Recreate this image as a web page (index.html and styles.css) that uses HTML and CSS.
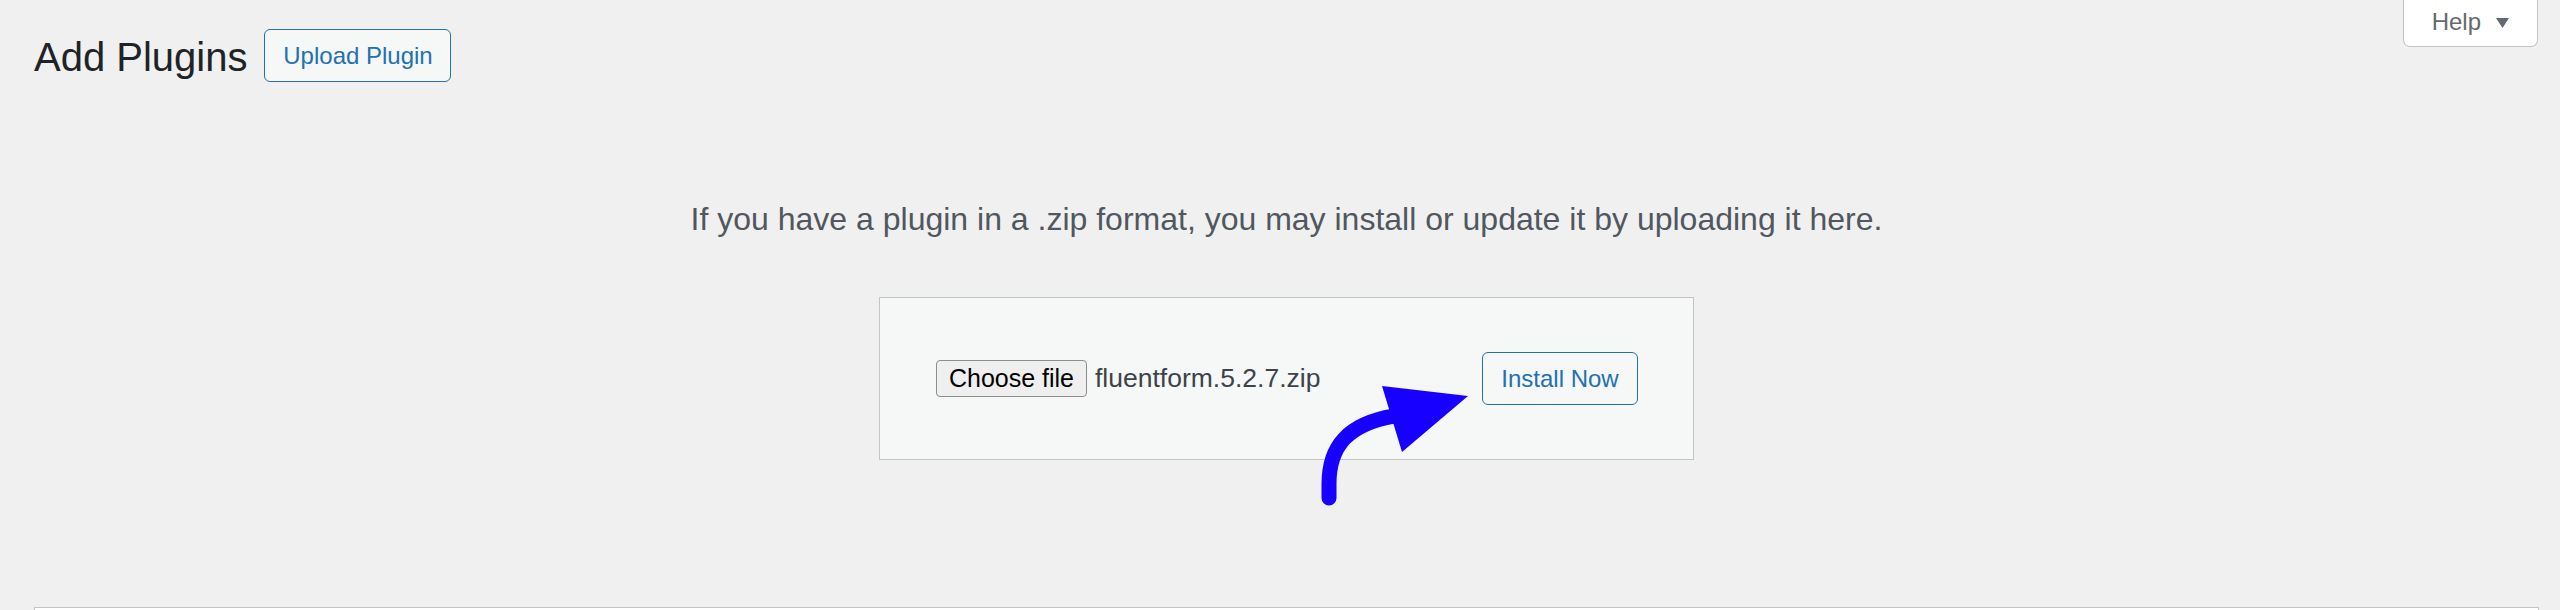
FILE: index.html
```html
<!DOCTYPE html>
<html lang="en">
<head>
<meta charset="utf-8">
<title>Add Plugins</title>
<link rel="stylesheet" href="styles.css">
</head>
<body>
  <div class="screen-meta-links">
    <button class="help-tab" type="button">Help
      <svg class="help-caret" viewBox="0 0 13 10" width="13" height="10"><polygon points="0,0 13,0 6.5,10"/></svg>
    </button>
  </div>
  <div class="wrap">
    <div class="title-row">
      <h1 class="page-title">Add Plugins</h1>
      <a class="page-title-action" href="#">Upload Plugin</a>
    </div>
    <div class="upload-plugin">
      <p class="install-help">If you have a plugin in a .zip format, you may install or update it by uploading it here.</p>
      <form class="upload-form">
        <div class="file-field">
          <button class="file-button" type="button">Choose file</button>
          <span class="file-name">fluentform.5.2.7.zip</span>
        </div>
        <button class="install-button" type="button">Install Now</button>
        <svg class="pointer-arrow" viewBox="0 0 815 220" width="815" height="220">
          <path d="M449,200 L449,186 C449,148 468,126 514,118" fill="none" stroke="#1700ff" stroke-width="15" stroke-linecap="round"/>
          <polygon points="502,88 588,98 522,154" fill="#1700ff"/>
        </svg>
      </form>
    </div>
    <div class="list-table"></div>
  </div>
</body>
</html>
```

FILE: styles.css
```css
html, body {
  margin: 0;
  padding: 0;
  background: #f0f0f1;
  height: 610px;
  overflow: hidden;
}

body {
  font-family: "Liberation Sans", Arial, sans-serif;
  color: #3c434a;
}

.screen-meta-links {
  float: right;
  margin-right: 22px;
}

.help-tab {
  display: flex;
  align-items: center;
  gap: 15px;
  height: 47px;
  box-sizing: border-box;
  padding: 0 28px 2px 28px;
  background: #fff;
  border: 1px solid #c3c4c7;
  border-top: none;
  border-radius: 0 0 7px 7px;
  font-family: "Liberation Sans", Arial, sans-serif;
  font-size: 24px;
  color: #646970;
}

.help-caret {
  fill: #646970;
  margin-top: 1px;
}

.wrap {
  padding: 29px 21px 0 34px;
}

.title-row {
  display: flex;
  align-items: center;
  gap: 17px;
}

.page-title {
  margin: 0;
  font-size: 40px;
  line-height: 46px;
  font-weight: 400;
  color: #1d2327;
  position: relative;
  top: 1px;
}

.page-title-action {
  display: flex;
  align-items: center;
  justify-content: center;
  box-sizing: border-box;
  width: 187px;
  height: 53px;
  border: 1.5px solid #2271b1;
  border-radius: 6px;
  background: #f6f7f7;
  color: #2271b1;
  font-size: 24px;
  text-decoration: none;
}

.upload-plugin {
  display: flex;
  flex-direction: column;
  align-items: center;
}

.install-help {
  margin: 119px 0 0;
  font-size: 32px;
  line-height: 36px;
  color: #50575e;
  text-align: center;
}

.upload-form {
  position: relative;
  box-sizing: border-box;
  width: 815px;
  height: 163px;
  margin-top: 60px;
  padding: 0 55px 0 56px;
  display: flex;
  align-items: center;
  justify-content: space-between;
  background: #f6f7f7;
  border: 1.5px solid #c3c4c7;
}

.file-field {
  display: flex;
  align-items: center;
  gap: 8px;
}

.file-button {
  box-sizing: border-box;
  width: 151px;
  height: 37px;
  padding: 0;
  background: #efefef;
  border: 1.5px solid #8d8d8d;
  border-radius: 4px;
  font-family: "Liberation Sans", Arial, sans-serif;
  font-size: 25px;
  color: #000;
}

.file-name {
  font-size: 26.5px;
  color: #3c434a;
}

.install-button {
  box-sizing: border-box;
  width: 156px;
  height: 53px;
  padding: 0;
  background: #f6f7f7;
  border: 1.5px solid #2271b1;
  border-radius: 6px;
  font-family: "Liberation Sans", Arial, sans-serif;
  font-size: 24px;
  color: #2271b1;
}

.pointer-arrow {
  position: absolute;
  left: 0;
  top: 0;
  overflow: visible;
  pointer-events: none;
}

.list-table {
  margin-top: 147px;
  height: 10px;
  background: #fff;
  border: 1.5px solid #c3c4c7;
}
```
